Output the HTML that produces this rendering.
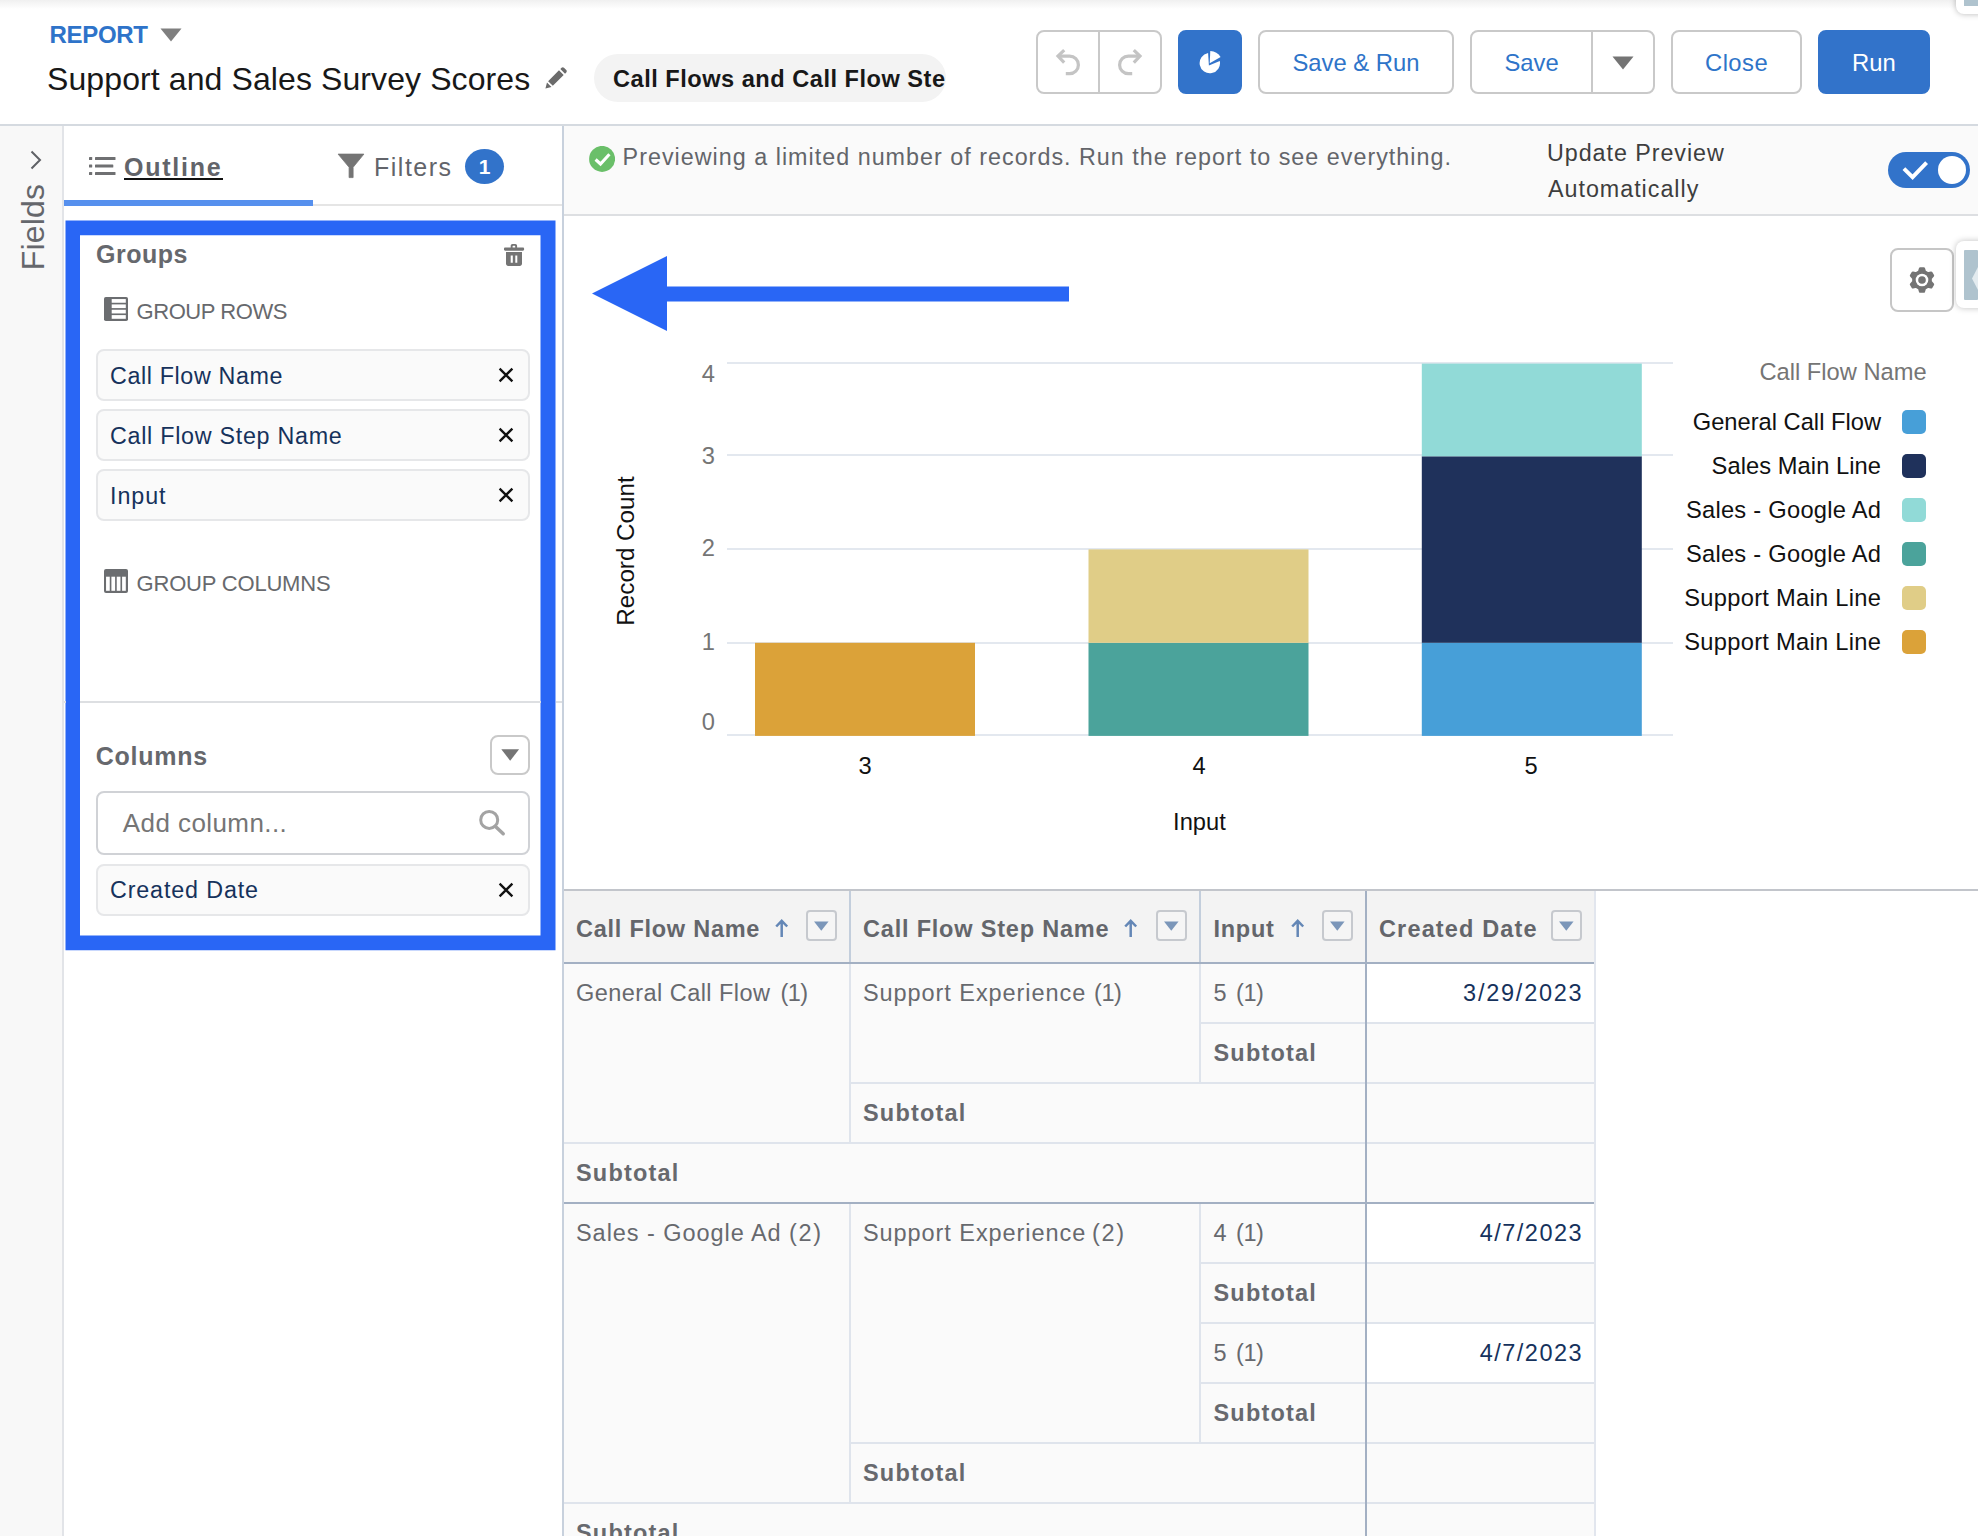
<!DOCTYPE html>
<html lang="en">
<head>
<meta charset="utf-8">
<title>Support and Sales Survey Scores</title>
<style>
*{box-sizing:border-box;margin:0;padding:0}
html,body{width:1978px;height:1536px;overflow:hidden;background:#fff}
body{font-family:"Liberation Sans",sans-serif;position:relative;color:#181818}
.abs{position:absolute}
.t{position:absolute;white-space:pre;line-height:1}
.btn{position:absolute;top:30px;height:64px;border:2px solid #c9c9c9;border-radius:8px;background:#fff}
.btn.brand{background:#3273ca;border-color:#3273ca}
.pill{position:absolute;left:96px;width:434px;height:52px;background:#fafafa;border:2px solid #e6e7e9;border-radius:8px}
.dd{position:absolute;width:31px;height:31px;border:2px solid #c6c9ce;border-radius:4px;background:#f5f5f5}
</style>
</head>
<body>
<div class="abs" style="left:0;top:0;width:1978px;height:9px;background:linear-gradient(#f0f0f0,#fff)"></div>
<div class="abs" style="left:0;top:124px;width:1978px;height:2px;background:#d5dae0"></div>
<div class="abs" style="left:0;top:126px;width:62px;height:1410px;background:#f8f8f8"></div>
<div class="abs" style="left:62px;top:126px;width:2px;height:1410px;background:#e2e4e8"></div>
<div class="abs" style="left:562px;top:126px;width:2px;height:1410px;background:#c8d1dd"></div>
<div class="t" style="left:49.5px;top:23.00px;font-size:24px;font-weight:700;color:#2e73c9;letter-spacing:-0.3px;">REPORT</div>
<svg class="abs" style="left:160px;top:28px" width="22" height="14" viewBox="0 0 22 14"><path d="M0.5 0.5H21.5L11 13.5Z" fill="#7f7f7f"/></svg>
<div class="t" style="left:47px;top:63.00px;font-size:32px;color:#181818;letter-spacing:0.1px;">Support and Sales Survey Scores</div>
<svg class="abs" style="left:544px;top:66px" width="24" height="24" viewBox="0 0 25 25"><path d="M1.5 23.5l1.6-6.3 4.7 4.7z M4.3 15.8L15.6 4.5l4.9 4.9L9.2 20.7z M17 3.1l1.3-1.3c.7-.7 1.8-.7 2.500 0l2.400 2.400c.7.7.7 1.8 0 2.500L21.900 8z" fill="#6b6b6b"/></svg>
<div class="abs" style="left:594px;top:54px;width:352px;height:48px;border-radius:24px;background:#f3f3f3;overflow:hidden"><div class="t" style="left:19px;top:14px;font-size:23.600px;font-weight:700;color:#181818;letter-spacing:0.500px">Call Flows and Call Flow Steps</div></div>
<div class="btn" style="left:1036px;width:126px"></div><div class="abs" style="left:1098px;top:32px;width:2px;height:60px;background:#c9c9c9"></div>
<svg class="abs" style="left:1055px;top:48px" width="28" height="28" viewBox="0 0 28 28" fill="none" stroke="#c4c4c4" stroke-width="3.200"><path d="M9.200 2.100L3 8.100L9.200 14.700"/><path d="M3 8.100H14.600A8.800 8.800 0 0 1 14.600 25.700H10.800"/></svg>
<svg class="abs" style="left:1114.500px;top:48px" width="28" height="28" viewBox="0 0 28 28" fill="none" stroke="#c4c4c4" stroke-width="3.200"><path d="M18.800 2.100L25 8.100L18.800 14.700"/><path d="M25 8.100H13.400A8.800 8.800 0 0 0 13.400 25.700H17.200"/></svg>
<div class="btn brand" style="left:1178px;width:64px"></div>
<svg class="abs" style="left:1198px;top:50px" width="24" height="24" viewBox="0 0 24 24" fill="#fff"><path d="M10.100 2.980L10.900 15.600L21.800 10.900A10.200 10.200 0 1 1 10.100 2.980Z"/><path d="M11.700 13.250L12.300 0.900A12.400 12.400 0 0 1 22.600 7Z"/></svg>
<div class="btn" style="left:1258px;width:196px"></div>
<div class="t" style="left:1292.5px;top:51.00px;font-size:23.8px;color:#2e74c9;">Save &amp; Run</div>
<div class="btn" style="left:1470px;width:185px"></div><div class="abs" style="left:1591px;top:32px;width:2px;height:60px;background:#c9c9c9"></div>
<div class="t" style="left:1504.5px;top:51.00px;font-size:23.8px;color:#2e74c9;">Save</div>
<svg class="abs" style="left:1612px;top:56px" width="22" height="14" viewBox="0 0 22 14"><path d="M0.500 0.500H21.500L11 13.500Z" fill="#747474"/></svg>
<div class="btn" style="left:1671px;width:131px"></div>
<div class="t" style="left:1705px;top:51.00px;font-size:23.8px;color:#2e74c9;letter-spacing:0.45px;">Close</div>
<div class="btn brand" style="left:1818px;width:112px"></div>
<div class="t" style="left:1852px;top:51.00px;font-size:23.8px;color:#fff;">Run</div>
<div class="abs" style="left:1956px;top:-10px;width:40px;height:24px;border-radius:8px;background:#fff;box-shadow:0 0 6px rgba(0,0,0,.28)"></div><div class="abs" style="left:1964px;top:0;width:14px;height:6px;background:#afc3ce"></div>
<svg class="abs" style="left:29px;top:150px" width="14" height="20" viewBox="0 0 14 20" fill="none" stroke="#5f6166" stroke-width="2"><path d="M2.500 1.500L11 10L2.500 18.500"/></svg>
<div class="t" style="left:33.300px;top:227px;font-size:32px;color:#65676c;letter-spacing:0.150px;transform:translate(-50%,-50%) rotate(-90deg)">Fields</div>
<svg class="abs" style="left:89px;top:156px" width="27" height="20" viewBox="0 0 27 20" fill="#6f7072"><rect x="0" y="1" width="3.200" height="3" rx=".6"/><rect x="6" y="1" width="20.500" height="3" rx=".6"/><rect x="0" y="8.500" width="3.200" height="3" rx=".6"/><rect x="6" y="8.500" width="18.300" height="3" rx=".6"/><rect x="0" y="16" width="3.200" height="3" rx=".6"/><rect x="6" y="16" width="20.500" height="3" rx=".6"/></svg>
<div class="t" style="left:124px;top:155.00px;font-size:25px;font-weight:700;color:#62646a;letter-spacing:1.75px;">Outline</div>
<div class="abs" style="left:124px;top:178px;width:99px;height:2px;background:#111"></div>
<div class="abs" style="left:312px;top:204px;width:250px;height:2px;background:#e5e5e5"></div>
<div class="abs" style="left:64px;top:200px;width:249px;height:6px;background:#5690ee"></div>
<svg class="abs" style="left:337px;top:153px" width="28" height="26" viewBox="0 0 28 26"><path d="M1.100 1.100H26.900L16.100 14.300V24.600H12.100V14.300Z" fill="#747474" stroke="#747474" stroke-width="0.800" stroke-linejoin="round"/></svg>
<div class="t" style="left:374px;top:155.00px;font-size:25px;color:#62646a;letter-spacing:1.5px;">Filters</div>
<div class="abs" style="left:465px;top:149px;width:39px;height:35px;border-radius:19.500px/17.500px;background:#3273ca"></div>
<div class="t" style="left:484.500px;top:156px;font-size:21px;font-weight:700;color:#fff;transform:translateX(-50%)">1</div>
<svg class="abs" style="left:64px;top:218px" width="494" height="734" viewBox="64 218 494 734"><path d="M65.500 220.600H555.500V950.300H65.500Z M80 235.200V935.500H540.500V235.200Z" fill="#2966f5" fill-rule="evenodd"/></svg>
<div class="t" style="left:96px;top:242.00px;font-size:25px;font-weight:700;color:#66686d;letter-spacing:0.52px;">Groups</div>
<svg class="abs" style="left:503px;top:243px" width="22" height="24" viewBox="0 0 22 24" fill="#747474"><path fill-rule="evenodd" d="M7.700 4.400V2.800C7.700 1.800 8.500 1 9.500 1H12.300C13.300 1 14.100 1.800 14.100 2.800V4.400H19.900C20.600 4.400 21.100 4.900 21.100 5.600V6.600C21.100 7.300 20.600 7.800 19.900 7.800H2.200C1.500 7.800 1 7.300 1 6.600V5.600C1 4.900 1.500 4.400 2.200 4.400Z M9.600 4.400H12.200V3.300C12.200 3 12 2.800 11.700 2.800H10.100C9.800 2.800 9.600 3 9.600 3.300Z"/><path fill-rule="evenodd" d="M3 9H19V20.700C19 21.900 18 22.900 16.800 22.900H5.200C4 22.900 3 21.900 3 20.700Z M7.700 12.400V19.800H9.800V12.400Z M12.300 12.400V19.800H14.300V12.400Z"/></svg>
<svg class="abs" style="left:104px;top:297px" width="24" height="24" viewBox="0 0 24 24"><rect x="0" y="0" width="24" height="24" rx="1.800" fill="#6b6d70"/><rect x="7.700" y="2.05" width="14.100" height="3.700" fill="#fff"/><rect x="7.700" y="7.40" width="14.100" height="3.700" fill="#fff"/><rect x="7.700" y="12.75" width="14.100" height="3.700" fill="#fff"/><rect x="7.700" y="18.10" width="14.100" height="3.700" fill="#fff"/></svg>
<div class="t" style="left:136.6px;top:301.00px;font-size:22px;color:#67696d;letter-spacing:-0.45px;">GROUP ROWS</div>
<div class="pill" style="top:349px"></div>
<div class="t" style="left:110px;top:365.00px;font-size:23.3px;color:#16325c;letter-spacing:0.62px;">Call Flow Name</div>
<svg class="abs" style="left:498px;top:367px" width="16" height="16" viewBox="0 0 16 16" fill="none" stroke="#111" stroke-width="2.300"><path d="M1.600 1.600L14.400 14.400M14.400 1.600L1.600 14.400"/></svg>
<div class="pill" style="top:409px"></div>
<div class="t" style="left:110px;top:425.00px;font-size:23.3px;color:#16325c;letter-spacing:0.72px;">Call Flow Step Name</div>
<svg class="abs" style="left:498px;top:427px" width="16" height="16" viewBox="0 0 16 16" fill="none" stroke="#111" stroke-width="2.300"><path d="M1.600 1.600L14.400 14.400M14.400 1.600L1.600 14.400"/></svg>
<div class="pill" style="top:469px"></div>
<div class="t" style="left:110px;top:485.00px;font-size:23.3px;color:#16325c;letter-spacing:0.9199999999999999px;">Input</div>
<svg class="abs" style="left:498px;top:487px" width="16" height="16" viewBox="0 0 16 16" fill="none" stroke="#111" stroke-width="2.300"><path d="M1.600 1.600L14.400 14.400M14.400 1.600L1.600 14.400"/></svg>
<svg class="abs" style="left:104px;top:569px" width="24" height="24" viewBox="0 0 24 24"><rect x="0" y="0" width="24" height="24" rx="2" fill="#6b6d70"/><rect x="2.05" y="7.700" width="3.700" height="14.100" fill="#fff"/><rect x="7.40" y="7.700" width="3.700" height="14.100" fill="#fff"/><rect x="12.75" y="7.700" width="3.700" height="14.100" fill="#fff"/><rect x="18.10" y="7.700" width="3.700" height="14.100" fill="#fff"/></svg>
<div class="t" style="left:136.6px;top:573.00px;font-size:22px;color:#67696d;letter-spacing:-0.2px;">GROUP COLUMNS</div>
<div class="abs" style="left:64px;top:701px;width:1.500px;height:2px;background:#dddfe2"></div><div class="abs" style="left:80px;top:701px;width:460.500px;height:2px;background:#dddfe2"></div><div class="abs" style="left:555.500px;top:701px;width:6.500px;height:2px;background:#dddfe2"></div>
<div class="t" style="left:95.8px;top:744.00px;font-size:25px;font-weight:700;color:#66686d;letter-spacing:0.73px;">Columns</div>
<div class="abs" style="left:490px;top:735px;width:40px;height:40px;border:2px solid #c9c9c9;border-radius:8px;background:#fff"></div>
<svg class="abs" style="left:500.500px;top:749px" width="19" height="12" viewBox="0 0 19 12"><path d="M0.300 0.300H18.100L9.200 11.700Z" fill="#747474"/></svg>
<div class="abs" style="left:96px;top:791px;width:434px;height:64px;border:2px solid #d0d2d6;border-radius:8px;background:#fff"></div>
<div class="t" style="left:122.8px;top:810.00px;font-size:26px;color:#757575;letter-spacing:0.42px;">Add column...</div>
<svg class="abs" style="left:478px;top:809px" width="28" height="29" viewBox="0 0 28 29" fill="none" stroke="#a3a3a3" stroke-width="3" stroke-linecap="round"><circle cx="11.200" cy="10.900" r="8.500"/><path d="M17.500 17.400L25.200 24.700" stroke-width="3.500"/></svg>
<div class="pill" style="top:863.5px"></div>
<div class="t" style="left:110px;top:879.00px;font-size:23.3px;color:#16325c;letter-spacing:0.86px;">Created Date</div>
<svg class="abs" style="left:498px;top:881.5px" width="16" height="16" viewBox="0 0 16 16" fill="none" stroke="#111" stroke-width="2.300"><path d="M1.600 1.600L14.400 14.400M14.400 1.600L1.600 14.400"/></svg>
<div class="abs" style="left:564px;top:126px;width:1414px;height:88px;background:#fafafa"></div>
<div class="abs" style="left:564px;top:214px;width:1414px;height:2px;background:#dddfe2"></div>
<svg class="abs" style="left:589px;top:146px" width="26" height="26" viewBox="0 0 26 26"><circle cx="13.100" cy="12.900" r="13" fill="#6abf69"/><path d="M6.600 13.500L11.500 18L20.400 8.200" fill="none" stroke="#fff" stroke-width="3.100" stroke-linejoin="miter"/></svg>
<div class="t" style="left:622.6px;top:146.00px;font-size:23.3px;color:#63656a;letter-spacing:1.02px;">Previewing a limited number of records. Run the report to see everything.</div>
<div class="t" style="left:1547px;top:142.00px;font-size:23.3px;color:#3e3e3e;letter-spacing:0.95px;">Update Preview</div>
<div class="t" style="left:1548px;top:178.00px;font-size:23.3px;color:#3e3e3e;letter-spacing:0.98px;">Automatically</div>
<div class="abs" style="left:1888px;top:152px;width:82px;height:36px;border-radius:18px;background:#3273ca"></div><div class="abs" style="left:1937.700px;top:155.800px;width:28.500px;height:28.500px;border-radius:50%;background:#fff"></div>
<svg class="abs" style="left:1901px;top:161px" width="28" height="20" viewBox="0 0 28 20" fill="none" stroke="#fff" stroke-width="3.900"><path d="M2.900 7.600L11.600 16.200L25.600 1.600"/></svg>
<div class="abs" style="left:1890px;top:248px;width:64px;height:64px;border:2px solid #c6c6c6;border-radius:8px;background:#fff"></div>
<svg class="abs" style="left:1908px;top:266px" width="28" height="28" viewBox="0 0 28 28"><path d="M12.25 2.43L15.75 2.43L16.77 5.75L19.76 7.48L23.14 6.70L24.89 9.73L22.53 12.27L22.53 15.73L24.89 18.27L23.14 21.30L19.76 20.52L16.77 22.25L15.75 25.57L12.25 25.57L11.23 22.25L8.24 20.52L4.86 21.30L3.11 18.27L5.47 15.73L5.47 12.27L3.11 9.73L4.86 6.70L8.24 7.48L11.23 5.75Z" fill="#747474" stroke="#747474" stroke-width="2.600" stroke-linejoin="round"/><circle cx="14" cy="14" r="6.300" fill="#fff"/><circle cx="14" cy="14" r="3.800" fill="#747474"/></svg>
<div class="abs" style="left:1956px;top:241px;width:40px;height:67px;border-radius:8px;background:#fff;box-shadow:0 0 6px rgba(0,0,0,.25)"></div><div class="abs" style="left:1964px;top:250px;width:14px;height:50px;border-radius:1px;background:#afc3ce"></div><svg class="abs" style="left:1971px;top:264px" width="7" height="28" viewBox="0 0 7 28"><path d="M7 3L1 14.500L7 26Z" fill="#e3ebef"/></svg>
<svg class="abs" style="left:590px;top:250px" width="490" height="90" viewBox="590 250 490 90"><path d="M592 293.400L667 255.900V286.400H1069V301.600H667V330.900Z" fill="#2966f5"/></svg>
<svg class="abs" style="left:564px;top:340px" width="1414" height="520" viewBox="564 340 1414 520"><rect x="727" y="362.0" width="946" height="2" fill="#e3e8ef"/><rect x="727" y="454.0" width="946" height="2" fill="#e3e8ef"/><rect x="727" y="548.0" width="946" height="2" fill="#e3e8ef"/><rect x="727" y="642.0" width="946" height="2" fill="#e3e8ef"/><rect x="727" y="734.0" width="946" height="2" fill="#e3e8ef"/><rect x="755" y="642.8" width="220" height="93.1" fill="#dba239"/><rect x="1088.5" y="642.8" width="220" height="93.1" fill="#4ba39b"/><rect x="1088.5" y="549.4" width="220" height="93.4" fill="#e0cd87"/><rect x="1421.8" y="642.8" width="220" height="93.1" fill="#479fd8"/><rect x="1421.8" y="456.3" width="220" height="186.5" fill="#1f315b"/><rect x="1421.8" y="363.6" width="220" height="92.7" fill="#91dad7"/></svg>
<div class="t" style="right:1263px;top:363.00px;font-size:23.7px;color:#757575;">4</div>
<div class="t" style="right:1263px;top:445.00px;font-size:23.7px;color:#757575;">3</div>
<div class="t" style="right:1263px;top:537.00px;font-size:23.7px;color:#757575;">2</div>
<div class="t" style="right:1263px;top:631.00px;font-size:23.7px;color:#757575;">1</div>
<div class="t" style="right:1263px;top:711.00px;font-size:23.7px;color:#757575;">0</div>
<div class="t" style="left:625.500px;top:550.500px;font-size:24.200px;color:#111;transform:translate(-50%,-50%) rotate(-90deg)">Record Count</div>
<div class="t" style="left:865px;top:755px;font-size:23.7px;color:#111;transform:translateX(-50%)">3</div>
<div class="t" style="left:1199px;top:755px;font-size:23.7px;color:#111;transform:translateX(-50%)">4</div>
<div class="t" style="left:1531px;top:755px;font-size:23.7px;color:#111;transform:translateX(-50%)">5</div>
<div class="t" style="left:1199.400px;top:811px;font-size:23.7px;color:#111;transform:translateX(-50%)">Input</div>
<div class="t" style="right:51.40000000000009px;top:361.00px;font-size:23.7px;color:#757575;">Call Flow Name</div>
<div class="t" style="right:97px;top:411.00px;font-size:23.7px;color:#111;">General Call Flow</div>
<div class="abs" style="left:1902px;top:410px;width:24px;height:24px;border-radius:5px;background:#479fd8"></div>
<div class="t" style="right:96.94000000000005px;top:455.00px;font-size:23.7px;color:#111;letter-spacing:0.06px;">Sales Main Line</div>
<div class="abs" style="left:1902px;top:454px;width:24px;height:24px;border-radius:5px;background:#1f315b"></div>
<div class="t" style="right:96.74000000000001px;top:499.00px;font-size:23.7px;color:#111;letter-spacing:0.26px;">Sales - Google Ad</div>
<div class="abs" style="left:1902px;top:498px;width:24px;height:24px;border-radius:5px;background:#91dad7"></div>
<div class="t" style="right:96.74000000000001px;top:543.00px;font-size:23.7px;color:#111;letter-spacing:0.26px;">Sales - Google Ad</div>
<div class="abs" style="left:1902px;top:542px;width:24px;height:24px;border-radius:5px;background:#4ba39b"></div>
<div class="t" style="right:96.72000000000003px;top:587.00px;font-size:23.7px;color:#111;letter-spacing:0.28px;">Support Main Line</div>
<div class="abs" style="left:1902px;top:586px;width:24px;height:24px;border-radius:5px;background:#e0cd87"></div>
<div class="t" style="right:96.72000000000003px;top:631.00px;font-size:23.7px;color:#111;letter-spacing:0.28px;">Support Main Line</div>
<div class="abs" style="left:1902px;top:630px;width:24px;height:24px;border-radius:5px;background:#dba239"></div>
<div class="abs" style="left:564px;top:889px;width:1414px;height:2px;background:#c2c5cb"></div>
<div class="abs" style="left:564px;top:891px;width:1031px;height:71px;background:#f3f3f3"></div>
<div class="abs" style="left:564px;top:963px;width:1031px;height:573px;background:#fafafa"></div>
<div class="abs" style="left:1367px;top:964px;width:227px;height:58px;background:#fff"></div>
<div class="abs" style="left:1367px;top:1204px;width:227px;height:58px;background:#fff"></div>
<div class="abs" style="left:1367px;top:1324px;width:227px;height:58px;background:#fff"></div>
<div class="abs" style="left:564px;top:962px;width:1031px;height:2px;background:#a3b0c3"></div>
<div class="abs" style="left:1200px;top:1022px;width:395px;height:2px;background:#dfe4ec"></div>
<div class="abs" style="left:850px;top:1082px;width:745px;height:2px;background:#dfe4ec"></div>
<div class="abs" style="left:564px;top:1142px;width:1031px;height:2px;background:#dfe4ec"></div>
<div class="abs" style="left:564px;top:1202px;width:1031px;height:2px;background:#a3b0c3"></div>
<div class="abs" style="left:1200px;top:1262px;width:395px;height:2px;background:#dfe4ec"></div>
<div class="abs" style="left:1200px;top:1322px;width:395px;height:2px;background:#dfe4ec"></div>
<div class="abs" style="left:1200px;top:1382px;width:395px;height:2px;background:#dfe4ec"></div>
<div class="abs" style="left:850px;top:1442px;width:745px;height:2px;background:#dfe4ec"></div>
<div class="abs" style="left:564px;top:1502px;width:1031px;height:2px;background:#dfe4ec"></div>
<div class="abs" style="left:849px;top:891px;width:2px;height:71px;background:#c3cedc"></div>
<div class="abs" style="left:1199px;top:891px;width:2px;height:71px;background:#c3cedc"></div>
<div class="abs" style="left:849px;top:964px;width:2px;height:178px;background:#dfe4ec"></div>
<div class="abs" style="left:849px;top:1204px;width:2px;height:298px;background:#dfe4ec"></div>
<div class="abs" style="left:1199px;top:964px;width:2px;height:118px;background:#dfe4ec"></div>
<div class="abs" style="left:1199px;top:1204px;width:2px;height:238px;background:#dfe4ec"></div>
<div class="abs" style="left:1365px;top:891px;width:2px;height:645px;background:#a3b0c3"></div>
<div class="abs" style="left:1594px;top:891px;width:2px;height:645px;background:#e2e6ee"></div>
<div class="t" style="left:576px;top:918.00px;font-size:23.5px;font-weight:700;color:#64666b;letter-spacing:0.75px;">Call Flow Name</div>
<div class="t" style="left:863px;top:918.00px;font-size:23.5px;font-weight:700;color:#64666b;letter-spacing:0.8px;">Call Flow Step Name</div>
<div class="t" style="left:1213.5px;top:918.00px;font-size:23.5px;font-weight:700;color:#64666b;letter-spacing:0.72px;">Input</div>
<div class="t" style="left:1379px;top:918.00px;font-size:23.5px;font-weight:700;color:#64666b;letter-spacing:1.15px;">Created Date</div>
<svg class="abs" style="left:775px;top:918px" width="14" height="20" viewBox="0 0 14 20" fill="none" stroke="#6487b6" stroke-width="2.500"><path d="M6.700 19V3M1.200 8.500L6.700 2.800L12.200 8.500"/></svg>
<svg class="abs" style="left:1124px;top:918px" width="14" height="20" viewBox="0 0 14 20" fill="none" stroke="#6487b6" stroke-width="2.500"><path d="M6.700 19V3M1.200 8.500L6.700 2.800L12.200 8.500"/></svg>
<svg class="abs" style="left:1291px;top:918px" width="14" height="20" viewBox="0 0 14 20" fill="none" stroke="#6487b6" stroke-width="2.500"><path d="M6.700 19V3M1.200 8.500L6.700 2.800L12.200 8.500"/></svg>
<div class="dd" style="left:805.5px;top:910px"></div><svg class="abs" style="left:812.7px;top:920.800px" width="16.600" height="10.400" viewBox="0 0 15 10"><path d="M0.500 0.500H14.500L7.500 9.500Z" fill="#7b96b9"/></svg>
<div class="dd" style="left:1155.5px;top:910px"></div><svg class="abs" style="left:1162.7px;top:920.800px" width="16.600" height="10.400" viewBox="0 0 15 10"><path d="M0.500 0.500H14.500L7.500 9.500Z" fill="#7b96b9"/></svg>
<div class="dd" style="left:1321.5px;top:910px"></div><svg class="abs" style="left:1328.7px;top:920.800px" width="16.600" height="10.400" viewBox="0 0 15 10"><path d="M0.500 0.500H14.500L7.500 9.500Z" fill="#7b96b9"/></svg>
<div class="dd" style="left:1550.5px;top:910px"></div><svg class="abs" style="left:1557.7px;top:920.800px" width="16.600" height="10.400" viewBox="0 0 15 10"><path d="M0.500 0.500H14.500L7.500 9.500Z" fill="#7b96b9"/></svg>
<div class="t" style="left:576px;top:982.00px;font-size:23.5px;color:#67696e;letter-spacing:0.45px;">General Call Flow <span style="margin-left:3px;letter-spacing:-0.5px">(1)</span></div>
<div class="t" style="left:863px;top:982.00px;font-size:23.5px;color:#67696e;letter-spacing:0.93px;">Support Experience <span style="margin-left:0.5px;letter-spacing:-0.5px">(1)</span></div>
<div class="t" style="left:1213.5px;top:982.00px;font-size:23.5px;color:#67696e;">5 <span style="margin-left:3px;letter-spacing:-0.5px">(1)</span></div>
<div class="t" style="right:394.5999999999999px;top:982.00px;font-size:23.5px;color:#16325c;letter-spacing:1.75px;">3/29/2023</div>
<div class="t" style="left:1213.5px;top:1042.00px;font-size:23.5px;font-weight:700;color:#67696e;letter-spacing:1.2px;">Subtotal</div>
<div class="t" style="left:863px;top:1102.00px;font-size:23.5px;font-weight:700;color:#67696e;letter-spacing:1.2px;">Subtotal</div>
<div class="t" style="left:576px;top:1162.00px;font-size:23.5px;font-weight:700;color:#67696e;letter-spacing:1.2px;">Subtotal</div>
<div class="t" style="left:576px;top:1222.00px;font-size:23.5px;color:#67696e;letter-spacing:0.95px;">Sales - Google Ad <span style="margin-left:0px;letter-spacing:1.6px">(2)</span></div>
<div class="t" style="left:863px;top:1222.00px;font-size:23.5px;color:#67696e;letter-spacing:0.93px;">Support Experience <span style="margin-left:-1.5px;letter-spacing:1.6px">(2)</span></div>
<div class="t" style="left:1213.5px;top:1222.00px;font-size:23.5px;color:#67696e;">4 <span style="margin-left:3px;letter-spacing:-0.5px">(1)</span></div>
<div class="t" style="right:394.9000000000001px;top:1222.00px;font-size:23.5px;color:#16325c;letter-spacing:1.5px;">4/7/2023</div>
<div class="t" style="left:1213.5px;top:1282.00px;font-size:23.5px;font-weight:700;color:#67696e;letter-spacing:1.2px;">Subtotal</div>
<div class="t" style="left:1213.5px;top:1342.00px;font-size:23.5px;color:#67696e;">5 <span style="margin-left:3px;letter-spacing:-0.5px">(1)</span></div>
<div class="t" style="right:394.9000000000001px;top:1342.00px;font-size:23.5px;color:#16325c;letter-spacing:1.5px;">4/7/2023</div>
<div class="t" style="left:1213.5px;top:1402.00px;font-size:23.5px;font-weight:700;color:#67696e;letter-spacing:1.2px;">Subtotal</div>
<div class="t" style="left:863px;top:1462.00px;font-size:23.5px;font-weight:700;color:#67696e;letter-spacing:1.2px;">Subtotal</div>
<div class="t" style="left:576px;top:1522.00px;font-size:23.5px;font-weight:700;color:#67696e;letter-spacing:1.2px;">Subtotal</div>
</body>
</html>
